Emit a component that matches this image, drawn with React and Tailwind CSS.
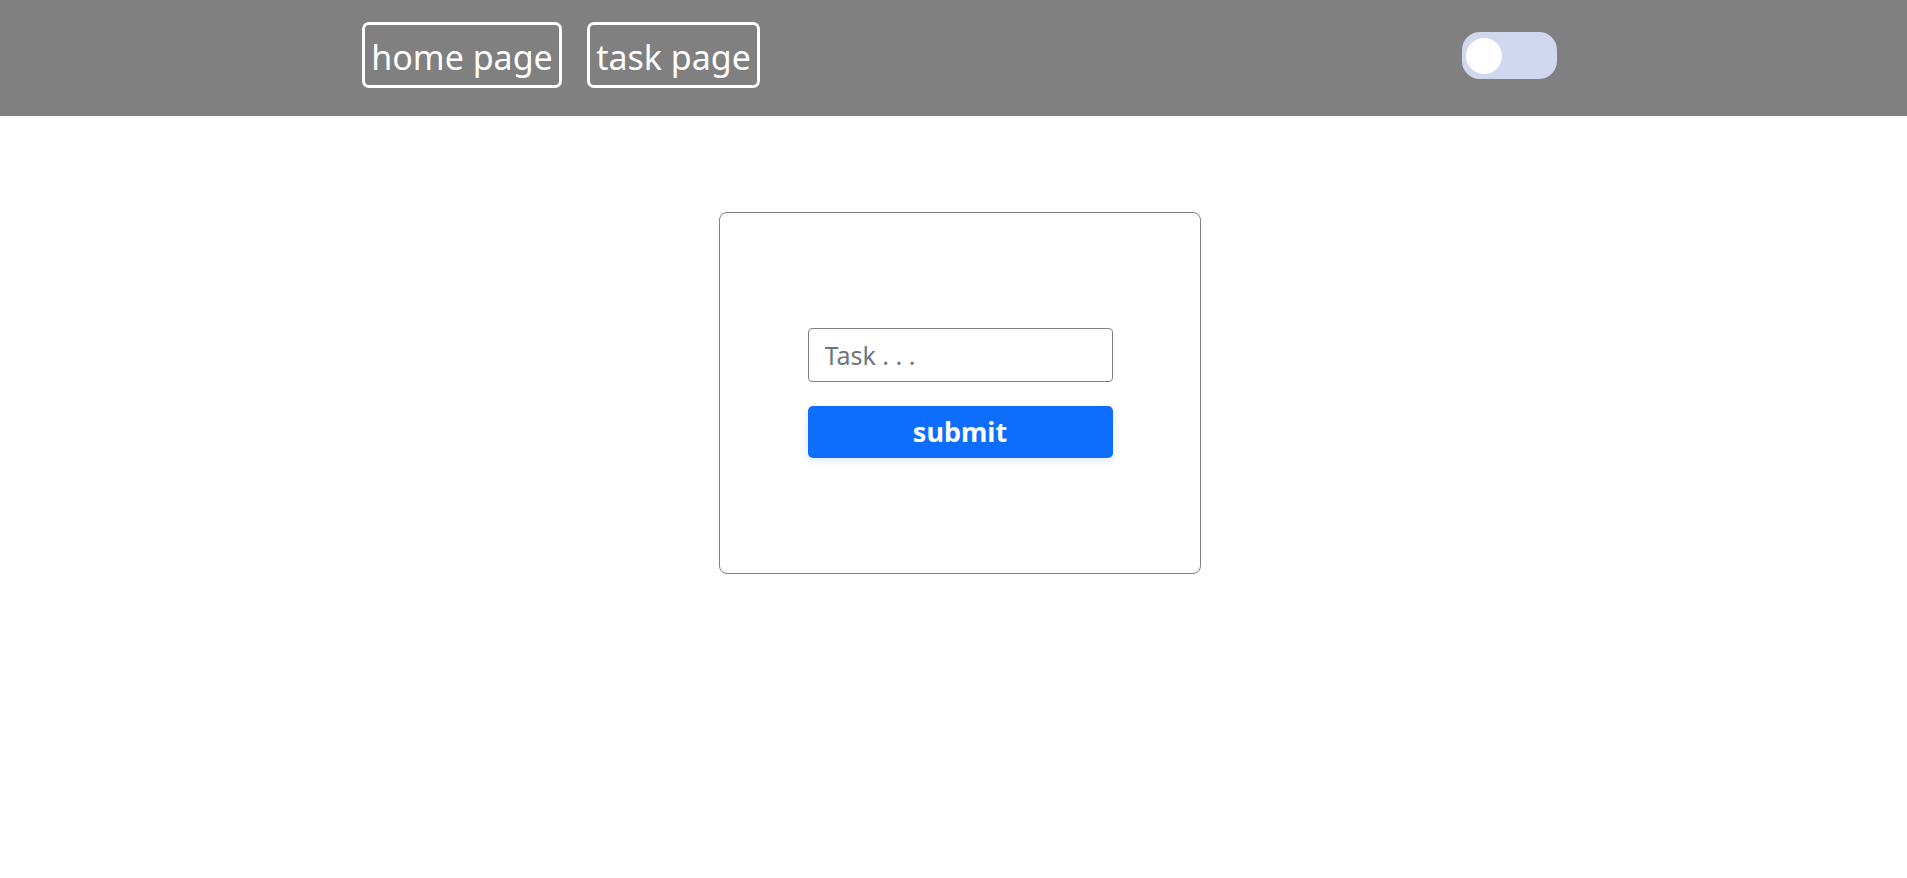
import React, { useState } from "react";

const NavBox = ({ label, width }) => (
  <a
    href="#"
    className={`flex items-center justify-center h-[66px] ${width} border-[3px] border-white rounded-[7px] text-white text-[34px] leading-none no-underline`}
  >
    <span className="mt-[3px]">{label}</span>
  </a>
);

export default function App() {
  const [on, setOn] = useState(false);
  const [task, setTask] = useState("");

  return (
    <div className="min-h-screen bg-white" style={{ fontFamily: '"Noto Sans", "Open Sans", sans-serif' }}>
      {/* Header */}
      <header className="h-[116px] bg-[#808080] flex items-start pl-[362px]">
        <nav className="flex gap-[25px] mt-[22px]">
          <NavBox label="home page" width="w-[200px]" />
          <NavBox label="task page" width="w-[173px]" />
        </nav>
        <button
          onClick={() => setOn(!on)}
          className={`ml-[702px] mt-[32px] w-[95px] h-[47px] rounded-[18px] bg-[#d0d8ef] flex items-center px-[4px] ${
            on ? "justify-end" : "justify-start"
          }`}
        >
          <span className="block w-[36px] h-[36px] rounded-full bg-white" />
        </button>
      </header>

      {/* Task form */}
      <main className="flex justify-center pl-[13px] pt-[96px]">
        <div className="w-[482px] h-[362px] border border-[#808080] rounded-[8px] flex flex-col items-center justify-center gap-[24px]">
          <input
            value={task}
            onChange={(e) => setTask(e.target.value)}
            placeholder="Task . . ."
            className="w-[305px] h-[54px] border border-[#808080] rounded-[4px] px-[16px] text-[25px] text-[#212529] placeholder:text-[#6c757d] outline-none"
          />
          <button className="w-[305px] h-[52px] rounded-[5px] bg-[#0d6efd] text-white text-[27px] font-bold shadow-[0_3px_8px_rgba(13,110,253,0.15)]">
            submit
          </button>
        </div>
      </main>
    </div>
  );
}
